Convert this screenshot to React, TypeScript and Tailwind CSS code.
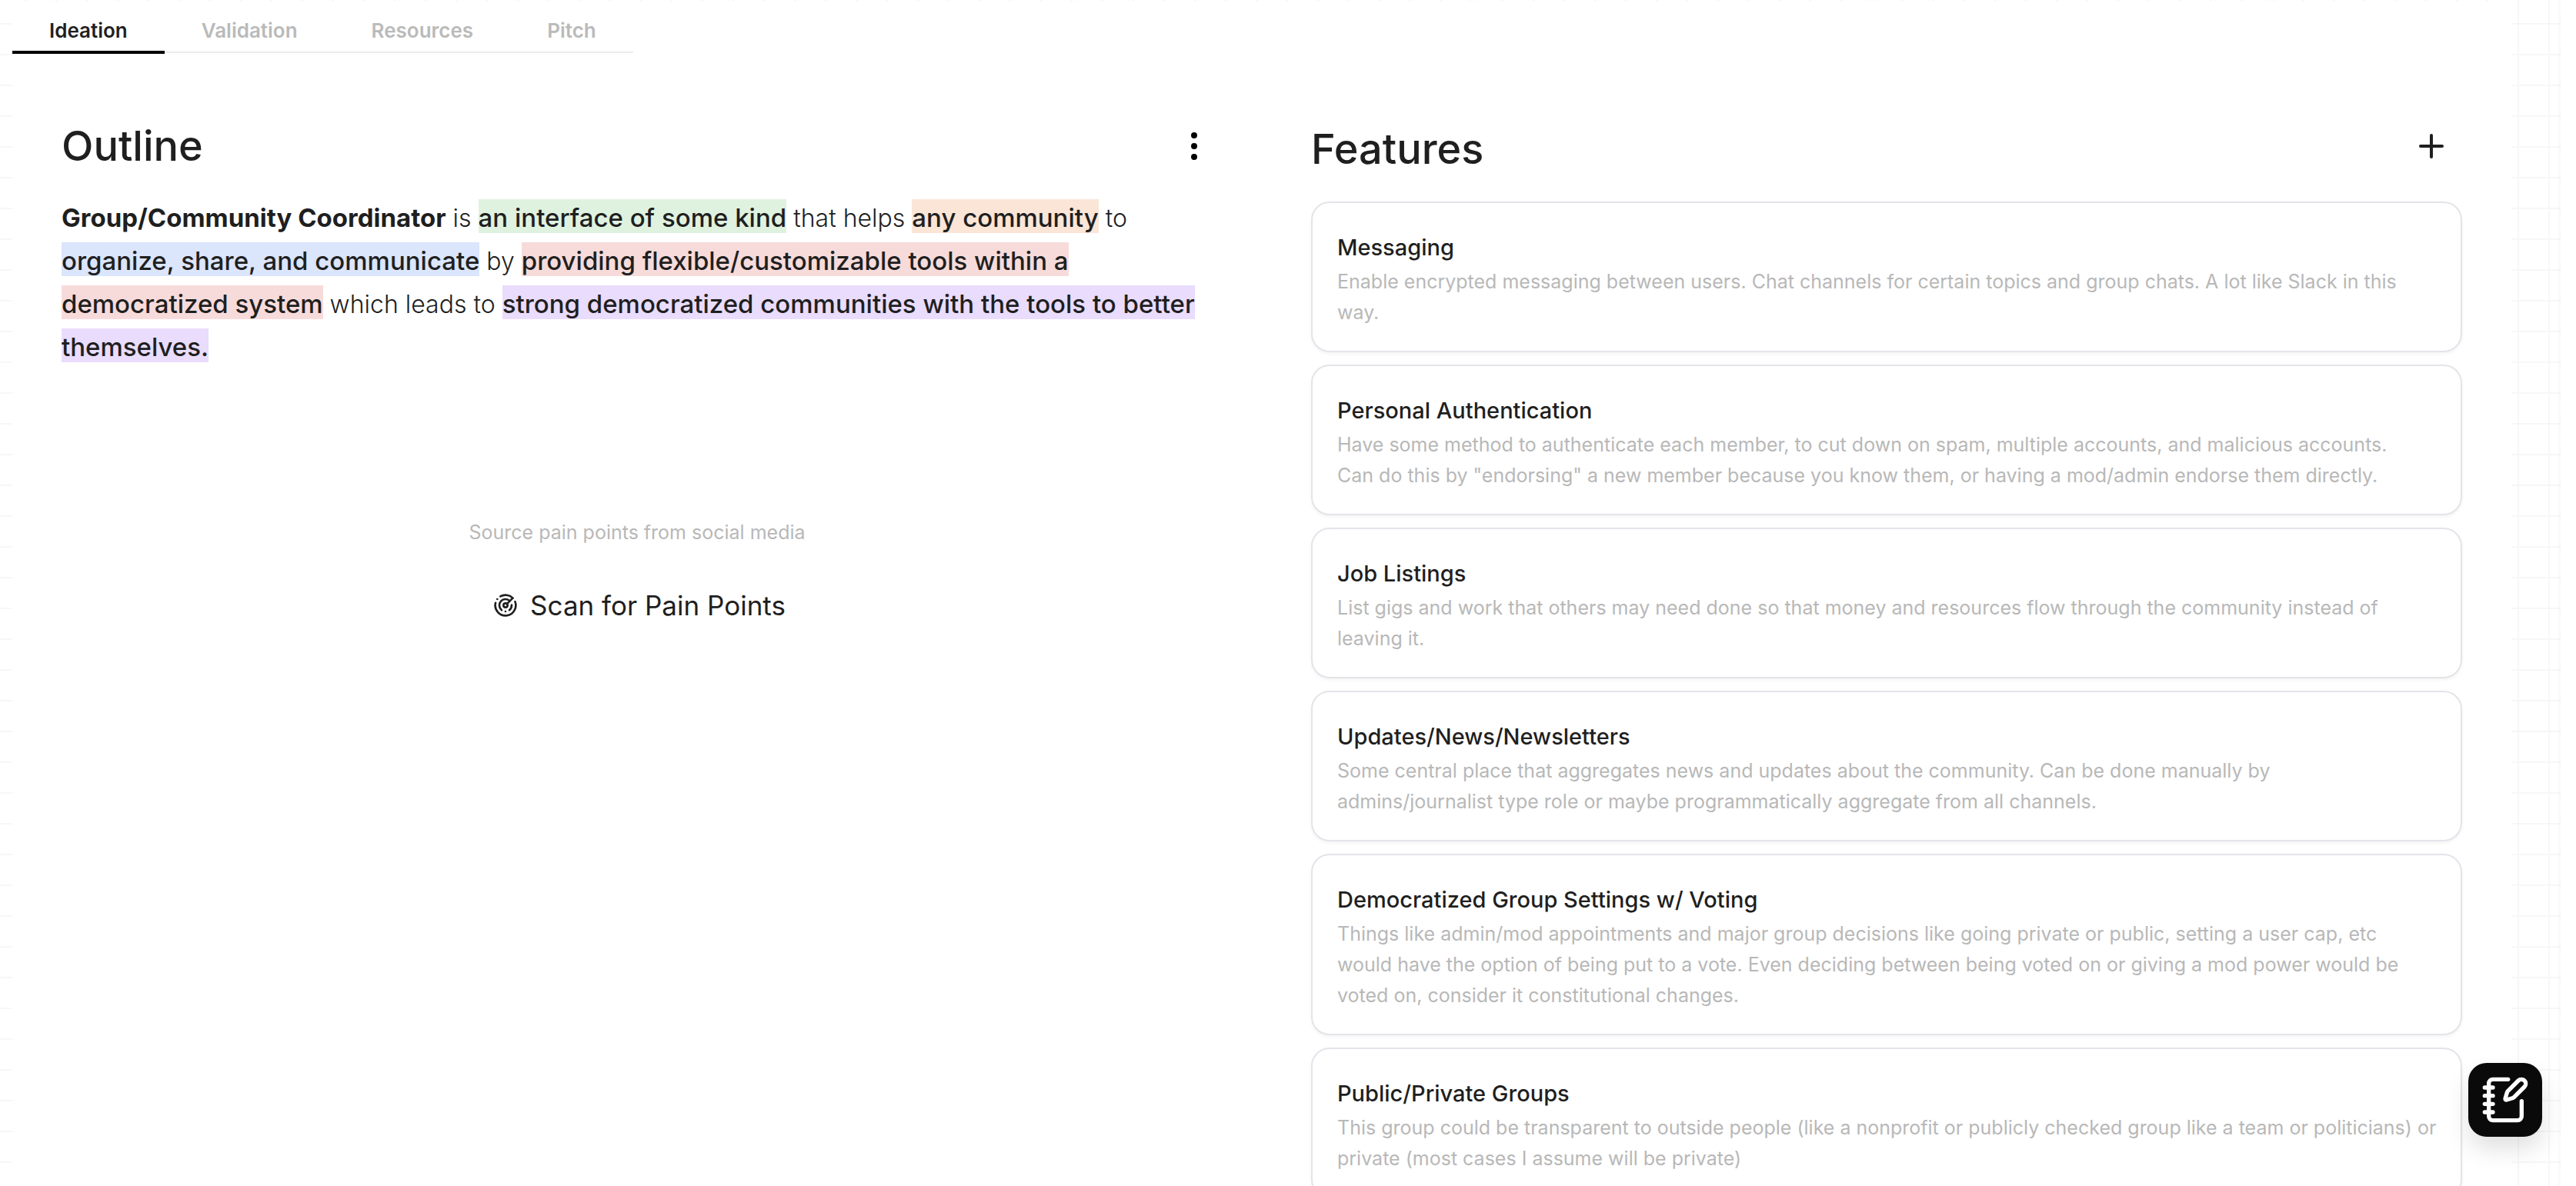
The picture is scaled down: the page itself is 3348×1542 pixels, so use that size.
import React, { useState } from "react";
import { EllipsisVertical, NotebookPen, Plus, Radar } from "lucide-react";

const TABS = ["Ideation", "Validation", "Resources", "Pitch"];

const FEATURES = [
  {
    title: "Messaging",
    text: "Enable encrypted messaging between users. Chat channels for certain topics and group chats. A lot like Slack in this\nway.",
  },
  {
    title: "Personal Authentication",
    text: 'Have some method to authenticate each member, to cut down on spam, multiple accounts, and malicious accounts.\nCan do this by "endorsing" a new member because you know them, or having a mod/admin endorse them directly.',
  },
  {
    title: "Job Listings",
    text: "List gigs and work that others may need done so that money and resources flow through the community instead of\nleaving it.",
  },
  {
    title: "Updates/News/Newsletters",
    text: "Some central place that aggregates news and updates about the community. Can be done manually by\nadmins/journalist type role or maybe programmatically aggregate from all channels.",
  },
  {
    title: "Democratized Group Settings w/ Voting",
    text: "Things like admin/mod appointments and major group decisions like going private or public, setting a user cap, etc\nwould have the option of being put to a vote. Even deciding between being voted on or giving a mod power would be\nvoted on, consider it constitutional changes.",
  },
  {
    title: "Public/Private Groups",
    text: "This group could be transparent to outside people (like a nonprofit or publicly checked group like a team or politicians) or\nprivate (most cases I assume will be private)",
  },
];

function Mark({ tone, children }: { tone: string; children: React.ReactNode }) {
  return (
    <mark className={`box-decoration-clone pt-1 text-[33px] leading-[52px] font-medium text-[#1f1f1f] ${tone}`}>{children}</mark>
  );
}

function Tabs() {
  const [active, setActive] = useState("Ideation");
  return (
    <div role="tablist" className="flex w-fit border-b-2 border-[#ececec]">
      {TABS.map((tab) => (
        <button
          key={tab}
          role="tab"
          type="button"
          aria-selected={tab === active}
          onClick={() => setActive(tab)}
          className={
            tab === active
              ? "-mb-[3px] border-b-4 border-black px-12 pt-3 text-[26px] leading-[52px] font-semibold text-[#1f1f1f]"
              : "-mb-[3px] border-b-4 border-transparent px-12 pt-3 text-[26px] leading-[52px] font-semibold text-[#bababa]"
          }
        >
          {tab}
        </button>
      ))}
    </div>
  );
}

function Outline() {
  return (
    <section>
      <header className="flex items-center justify-between">
        <h2 className="text-[54px] leading-[72px] font-medium">Outline</h2>
        <button type="button" aria-label="Outline options" className="text-black">
          <EllipsisVertical size={48} fill="currentColor" />
        </button>
      </header>
      <p className="mt-[30px] text-[32px] leading-[56px] font-light">
        <strong className="text-[33px] leading-[52px] font-bold">Group/Community Coordinator</strong> is{" "}
        <Mark tone="bg-[#dff2e0]">an interface of some kind</Mark> that helps{" "}
        <Mark tone="bg-[#fae5d7]">any community</Mark> to{" "}
        <Mark tone="bg-[#dbe5fc]">organize, share, and communicate</Mark> by{" "}
        <Mark tone="bg-[#f7dbda]">providing flexible/customizable tools within a democratized system</Mark>{" "}
        which leads to{" "}
        <Mark tone="bg-[#e9dcfc]">
          strong democratized communities with the tools to better themselves.
        </Mark>
      </p>
      <div className="mt-48 flex flex-col items-center gap-12">
        <p className="text-[25px] leading-10 text-[#b8b8b8]">Source pain points from social media</p>
        <button type="button" className="flex items-center gap-4 pl-1.5 text-[35px] leading-[54px]">
          <Radar size={32} />
          Scan for Pain Points
        </button>
      </div>
    </section>
  );
}

function Features() {
  return (
    <section>
      <header className="flex items-start justify-between pr-4">
        <h2 className="pt-1 text-[54px] leading-[72px] font-medium">Features</h2>
        <button type="button" aria-label="Add feature" className="py-3">
          <Plus size={48} />
        </button>
      </header>
      <ul className="mt-8 flex flex-col gap-4">
        {FEATURES.map((feature) => (
          <li
            key={feature.title}
            className="rounded-3xl border-2 border-[#e4e4ea] bg-white pt-[34px] pr-6 pb-[30px] pl-8 shadow-[0_2px_4px_rgba(0,0,0,0.05)]"
          >
            <h3 className="text-[29px] leading-[48px] font-medium">{feature.title}</h3>
            <p className="text-[25px] leading-10 whitespace-pre-line text-[#b8b8b8]">{feature.text}</p>
          </li>
        ))}
      </ul>
    </section>
  );
}

export default function App() {
  return (
    <div className="h-screen overflow-hidden bg-white pr-5 font-[Inter,sans-serif] text-[#1f1f1f]">
      <div className="h-full bg-[linear-gradient(to_right,#f7f7f7_2px,transparent_2px),linear-gradient(to_bottom,#f7f7f7_2px,transparent_2px)] bg-size-[40px_40px] bg-position-[32px_30px] pt-0.5 pr-16 pl-4 shadow-[inset_-4px_0_6px_-4px_rgba(0,0,0,0.06)]">
        <main className="h-full overflow-hidden bg-white">
          <Tabs />
          <div className="grid grid-cols-2 gap-32 px-16 pt-[85px]">
            <Outline />
            <Features />
          </div>
        </main>
      </div>
      <button
        type="button"
        aria-label="Open notes"
        className="fixed right-11 bottom-16 rounded-3xl bg-[#0a0a0a] p-4 text-white shadow-[0_16px_30px_rgba(0,0,0,0.12)]"
      >
        <NotebookPen size={64} />
      </button>
    </div>
  );
}
